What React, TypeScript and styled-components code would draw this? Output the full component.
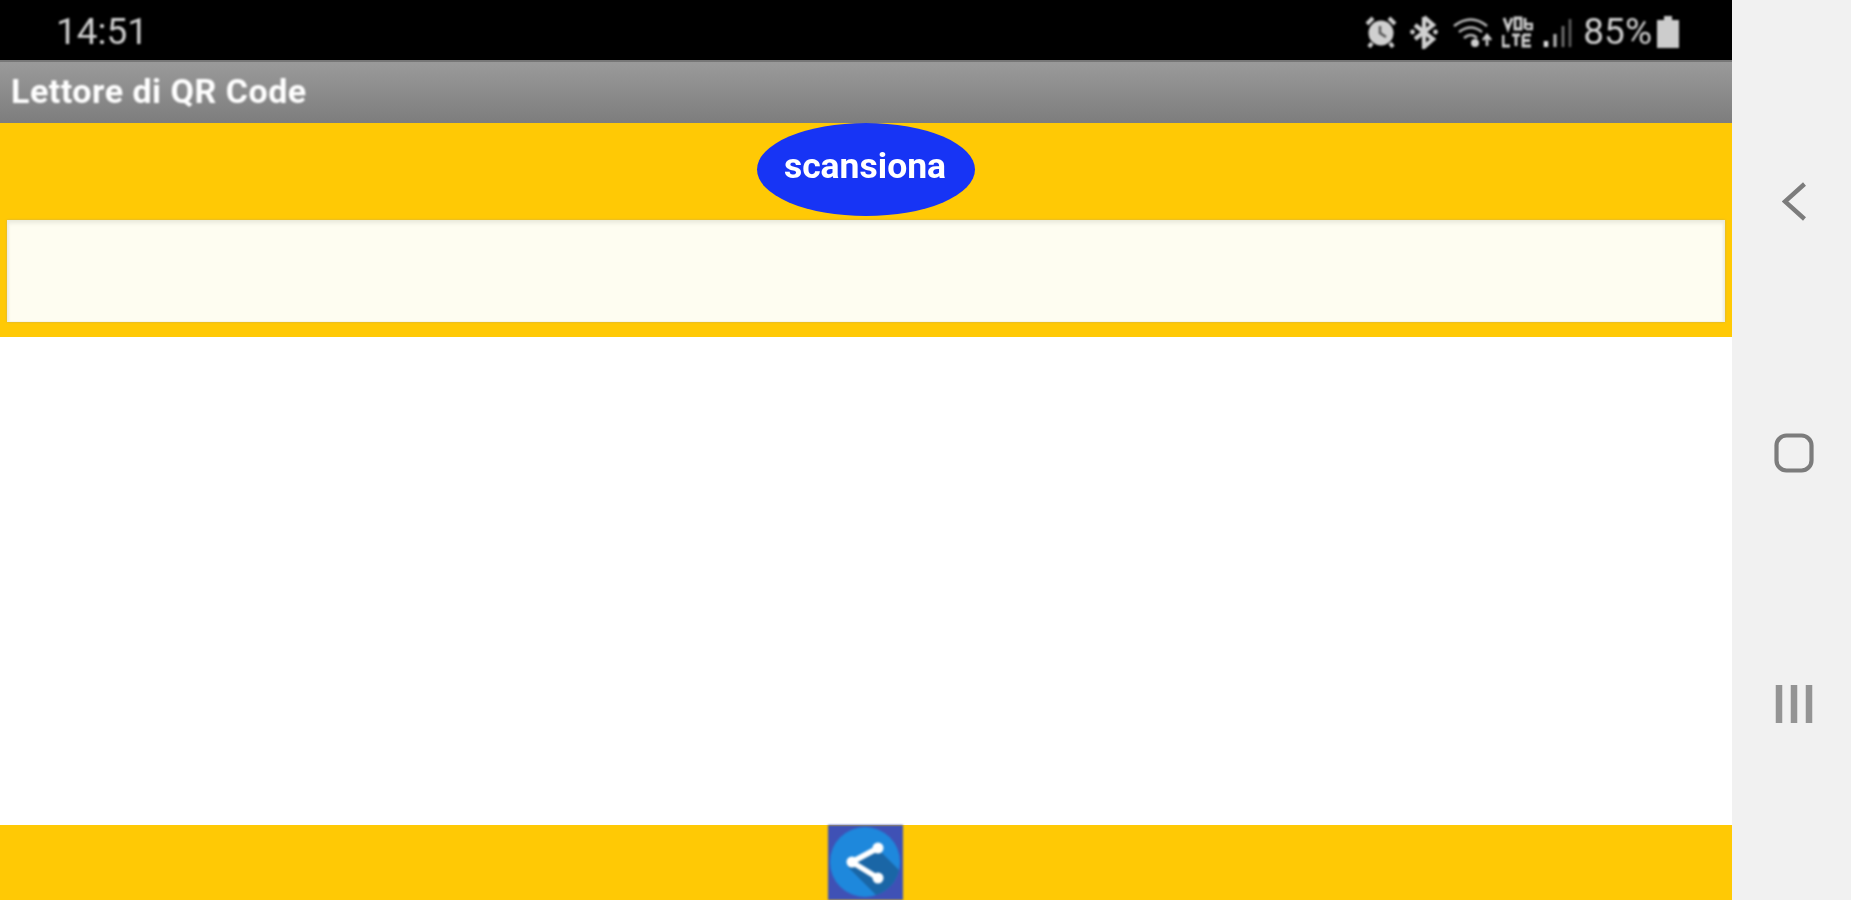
import React from "react";
import styled, { createGlobalStyle } from "styled-components";

const Global = createGlobalStyle`
  html, body { margin: 0; padding: 0; height: 100%; background: #fff; overflow: hidden; }
  #root { height: 100%; }
`;

const Screen = styled.div`
  display: flex;
  width: 1851px;
  height: 900px;
  font-family: Roboto, "Liberation Sans", sans-serif;
`;

const Main = styled.main`
  display: flex;
  flex-direction: column;
  width: 1732px;
  height: 900px;
`;

const StatusBar = styled.header`
  display: flex;
  align-items: center;
  justify-content: space-between;
  box-sizing: border-box;
  height: 60px;
  padding: 3px 52px 0 56px;
  background: #000;
`;

const Clock = styled.span`
  font-size: 37px;
  line-height: 1;
  color: #cfcfcf;
  filter: blur(1px);
`;

const StatusIcons = styled.div`
  display: flex;
  align-items: center;
  filter: blur(1px);
`;

const StatusGlyph = styled.svg<{ $gap: number }>`
  display: block;
  margin-right: ${(p) => p.$gap}px;
  fill: none;
  stroke: #d0d0d0;
`;

const Percent = styled.span`
  font-size: 37px;
  line-height: 1;
  color: #cfcfcf;
  margin-right: 5px;
`;

const TitleBar = styled.div`
  display: flex;
  align-items: center;
  box-sizing: border-box;
  height: 63px;
  padding: 0 0 3px 11px;
  background: linear-gradient(#9a9a9a, #7d7d7d);
  border-top: 2px solid #777;
`;

const Title = styled.h1`
  margin: 0;
  font-size: 34px;
  font-weight: 700;
  letter-spacing: 0.5px;
  color: #fff;
  filter: blur(0.8px);
`;

const ScanPanel = styled.section`
  display: flex;
  flex-direction: column;
  align-items: center;
  box-sizing: border-box;
  height: 214px;
  padding: 0 7px 15px;
  background: #ffc905;
`;

const ScanButton = styled.button`
  width: 218px;
  height: 93px;
  padding: 0 2px 8px 0;
  border: none;
  border-radius: 50%;
  background: #1734f5;
  color: #fff;
  font-family: inherit;
  font-size: 35.5px;
  font-weight: 700;
`;

const ButtonLabel = styled.span`
  display: block;
  filter: blur(0.6px);
`;

const ResultBox = styled.div`
  box-sizing: border-box;
  width: 100%;
  height: 102px;
  margin-top: 4px;
  background: #fefdf1;
  box-shadow: inset 0 3px 4px #e9e9dc, inset 2px 0 2px #f0f0e4, inset -2px 0 2px #f0f0e4, 0 0 2px #c9ae52;
`;

const Blank = styled.div`
  flex: 1;
  background: #fff;
`;

const Footer = styled.footer`
  display: flex;
  justify-content: center;
  height: 75px;
  background: #ffc905;
`;

const ShareButton = styled.svg`
  display: block;
  width: 75px;
  height: 75px;
  margin-left: -1px;
  filter: blur(0.8px);
`;

const NavBar = styled.nav`
  display: flex;
  flex-direction: column;
  align-items: center;
  gap: 212px;
  box-sizing: border-box;
  width: 119px;
  height: 900px;
  padding: 182px 0 0 4px;
  background: #f1f1f1;
`;

const NavIcon = styled.svg`
  display: block;
  fill: none;
  stroke: #7c7c7c;
  filter: blur(0.7px);
`;

export default function App() {
  return (
    <Screen>
      <Global />
      <Main>
        <StatusBar>
          <Clock>14:51</Clock>
          <StatusIcons>
            <StatusGlyph $gap={13} width="32" height="32" viewBox="0 0 32 32">
              <circle cx="16" cy="17" r="12.5" fill="#d0d0d0" stroke="none" />
              <path d="M2 8 L8 2 M24 2 L30 8 M7 27 L4 31 M25 27 L28 31" strokeWidth="4" />
              <path d="M15 10 V17 L21 21" stroke="#555" strokeWidth="2.5" />
            </StatusGlyph>
            <StatusGlyph $gap={14} width="28" height="34" viewBox="0 0 28 34">
              <path d="M14 2 V32 L23 24 L5 10 M14 2 L23 10 L5 24" strokeWidth="4.2" />
              <circle cx="2.5" cy="17" r="2.4" fill="#d0d0d0" stroke="none" />
              <circle cx="25.5" cy="17" r="2.4" fill="#d0d0d0" stroke="none" />
            </StatusGlyph>
            <StatusGlyph $gap={10} width="40" height="32" viewBox="0 0 40 32">
              <path d="M2 10 Q19 -3 35 10 M7 16 Q19 7 30 16 M12 22 Q19 16 25 22" strokeWidth="2.6" stroke="#b8b8b8" />
              <circle cx="23" cy="27" r="4" fill="#d0d0d0" stroke="none" />
              <path d="M35 30 V20 M31 24 L35 19 L39 24" strokeWidth="2.6" />
            </StatusGlyph>
            <StatusGlyph $gap={10} width="31" height="32" viewBox="0 0 31 32">
              <path d="M2 2 L6 13 L10 2 M13 2 H19 V13 H13 Z M23 2 V13 M1 19 V30 H8 M10 19 H18 M14 19 V30 M21 19 H29 M21 19 V30 H29 M21 24.5 H28" strokeWidth="2.8" />
              <path d="M23 8 H30 V13 H24" strokeWidth="2.6" />
            </StatusGlyph>
            <StatusGlyph $gap={11} width="29" height="32" viewBox="0 0 29 32">
              <path d="M3 31 V25" strokeWidth="4.5" stroke="#dedede" />
              <path d="M12 31 V18" strokeWidth="3.2" stroke="#b4b4b4" />
              <path d="M20 31 V10" strokeWidth="2.6" stroke="#787878" />
              <path d="M27 31 V3" strokeWidth="2.6" stroke="#626262" />
            </StatusGlyph>
            <Percent>85%</Percent>
            <svg width="23" height="32" viewBox="0 0 23 32">
              <path d="M7 0 H15 V4 H22 V32 H0 V4 H7 Z" fill="#cccccc" />
            </svg>
          </StatusIcons>
        </StatusBar>
        <TitleBar>
          <Title>Lettore di QR Code</Title>
        </TitleBar>
        <ScanPanel>
          <ScanButton>
            <ButtonLabel>scansiona</ButtonLabel>
          </ScanButton>
          <ResultBox />
        </ScanPanel>
        <Blank />
        <Footer>
          <ShareButton viewBox="0 0 75 75">
            <defs>
              <clipPath id="disc">
                <circle cx="37" cy="37" r="35" />
              </clipPath>
            </defs>
            <rect width="75" height="75" fill="#3f51b5" />
            <circle cx="37" cy="37" r="35" fill="#1e88dc" />
            <polygon points="20,42 50,24 80,54 80,80 58,80" fill="#1a66a6" clipPath="url(#disc)" />
            <path d="M50 23 L24 37 L50 53" fill="none" stroke="#fff" strokeWidth="5.5" />
            <circle cx="50" cy="23" r="5.5" fill="#fff" />
            <circle cx="24" cy="37" r="5.5" fill="#fff" />
            <circle cx="50" cy="53" r="5.5" fill="#fff" />
          </ShareButton>
        </Footer>
      </Main>
      <NavBar>
        <NavIcon width="24" height="39" viewBox="0 0 24 39">
          <path d="M22.5 2 L3 19.5 L22.5 37" strokeWidth="4.4" />
        </NavIcon>
        <NavIcon width="40" height="40" viewBox="0 0 40 40">
          <rect x="2.5" y="2.5" width="35" height="35" rx="10" strokeWidth="4.2" />
        </NavIcon>
        <NavIcon width="38" height="38" viewBox="0 0 38 38">
          <path d="M4 0 V38 M19 0 V38 M34 0 V38" strokeWidth="6.5" stroke="#949494" />
        </NavIcon>
      </NavBar>
    </Screen>
  );
}
